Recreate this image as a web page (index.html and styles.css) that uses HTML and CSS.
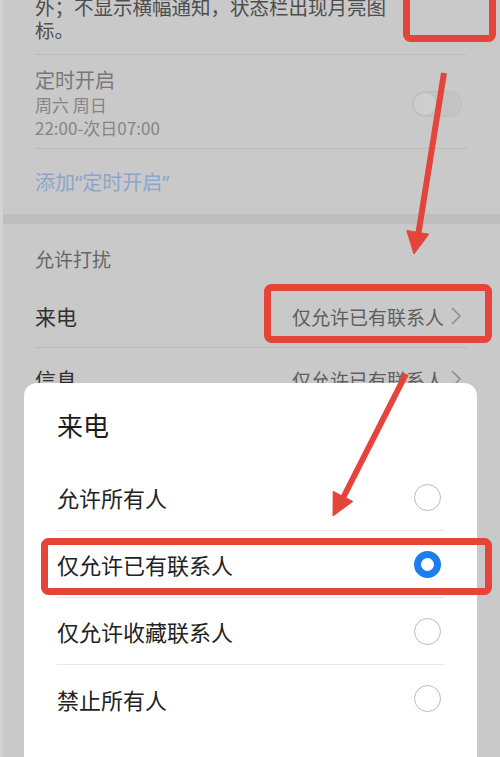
FILE: index.html
```html
<!DOCTYPE html>
<html lang="zh-CN">
<head>
<meta charset="utf-8">
<title>来电</title>
<link rel="stylesheet" href="styles.css">
</head>
<body>
<div class="screen">
  <div class="page">
    <div class="group">
      <div class="row intro">
        <p class="intro-text">外；不显示横幅通知，状态栏出现月亮图<br>标。</p>
        <span class="switch on"></span>
      </div>
      <div class="row timer">
        <div class="texts">
          <div class="timer-title">定时开启</div>
          <div class="timer-sub">周六 周日</div>
          <div class="timer-sub">22:00-次日07:00</div>
        </div>
        <span class="switch off"><span class="knob"></span></span>
      </div>
      <div class="link-row">添加“定时开启”</div>
    </div>
    <div class="band"></div>
    <div class="group">
      <div class="section-head">允许打扰</div>
      <div class="row item">
        <span class="label">来电</span>
        <span class="value">仅允许已有联系人<svg class="chev" width="12" height="20" viewBox="0 0 12 20"><polyline points="2,2 10,10 2,18" fill="none" stroke="#8a8a8a" stroke-width="1.5"/></svg></span>
      </div>
      <div class="row item">
        <span class="label">信息</span>
        <span class="value">仅允许已有联系人<svg class="chev" width="12" height="20" viewBox="0 0 12 20"><polyline points="2,2 10,10 2,18" fill="none" stroke="#8a8a8a" stroke-width="1.5"/></svg></span>
      </div>
    </div>
  </div>

  <div class="sheet">
    <div class="sheet-title">来电</div>
    <div class="option"><span>允许所有人</span><span class="radio"></span></div>
    <div class="option"><span>仅允许已有联系人</span><span class="radio checked"></span></div>
    <div class="option"><span>仅允许收藏联系人</span><span class="radio"></span></div>
    <div class="option"><span>禁止所有人</span><span class="radio"></span></div>
  </div>

  <svg class="annot" width="500" height="757" viewBox="0 0 500 757">
    <g fill="none" stroke="#e5443a" stroke-width="7">
      <rect x="406.5" y="-10" width="86" height="48.5" rx="4"/>
      <rect x="267.5" y="287.5" width="221" height="52" rx="4"/>
      <rect x="44.5" y="541.5" width="444" height="50" rx="4"/>
    </g>
    <g fill="#e5443a" stroke="#e5443a">
      <line x1="444" y1="73" x2="418" y2="236" stroke-width="6"/>
      <polygon points="414,254 406.8,230.5 428.8,234.2" stroke-width="1" stroke-linejoin="round"/>
      <line x1="406" y1="374" x2="343" y2="498" stroke-width="6"/>
      <polygon points="333,516 333.2,491.4 352.8,501.4" stroke-width="1" stroke-linejoin="round"/>
    </g>
  </svg>
</div>
</body>
</html>
```

FILE: styles.css
```css
* { box-sizing: border-box; }
html, body { margin: 0; padding: 0; }
body {
  background: #c9c9c9;
  font-family: "Noto Sans CJK SC", "Noto Sans", sans-serif;
}
.screen {
  position: relative;
  width: 500px;
  height: 757px;
  overflow: hidden;
  background: #c9c9c9;
  border-left: 3px solid #d2d2d2;
}
.page {
  margin-top: -5px;
  margin-left: -3px;
}
.group {
  padding: 0 33px 0 35px;
}
.row {
  display: flex;
  align-items: center;
  justify-content: space-between;
  border-bottom: 1px solid #bcbcbc;
}
.intro {
  align-items: flex-start;
  padding-bottom: 13px;
}
.intro-text {
  margin: 0;
  font-size: 19.5px;
  line-height: 23px;
  color: #4e4e4e;
}
.switch {
  display: block;
  width: 50px;
  height: 26px;
  border-radius: 13px;
}
.switch.on {
  margin-top: -25px;
  margin-right: 8px;
  width: 40px;
  background: #7a93b8;
}
.switch.off {
  position: relative;
  margin-right: 5px;
  margin-top: 2px;
  background: #c4c4c4;
  border: 1px solid #bdbdbd;
}
.switch .knob {
  position: absolute;
  left: 0;
  top: 0;
  width: 24px;
  height: 24px;
  border-radius: 50%;
  background: #cecece;
  border: 1px solid #bcbcbc;
}
.timer {
  padding-top: 11px;
  padding-bottom: 9px;
}
.timer-title {
  font-size: 20px;
  line-height: 27px;
  color: #787878;
}
.timer-sub {
  font-size: 17px;
  line-height: 23px;
  color: #858585;
}
.link-row {
  height: 65px;
  display: flex;
  align-items: center;
  font-family: "Noto Sans", "Noto Sans CJK SC", sans-serif;
  font-size: 20px;
  color: #8ba5cb;
}
.band {
  height: 10px;
  background: #bebebe;
}
.section-head {
  padding-top: 23px;
  padding-bottom: 14px;
  font-size: 19px;
  line-height: 24px;
  color: #666;
}
.item {
  height: 63px;
}
.label {
  font-size: 21px;
  color: #2e2e2e;
}
.value {
  display: flex;
  align-items: center;
  gap: 6px;
  font-size: 19px;
  color: #5e5e5e;
  margin-right: 5px;
}
.chev { display: block; }

.sheet {
  position: absolute;
  left: 21px;
  top: 383px;
  width: 453px;
  height: 420px;
  background: #fff;
  border-radius: 13px 13px 0 0;
  padding: 0 33px;
}
.sheet-title {
  padding-top: 25px;
  padding-bottom: 22px;
  font-size: 26px;
  line-height: 34px;
  color: #1c1c1c;
}
.option {
  height: 67px;
  display: flex;
  align-items: center;
  justify-content: space-between;
  border-bottom: 1px solid #e7e7e7;
  font-size: 22px;
  color: #222;
}
.option:last-child { border-bottom: none; }
.radio {
  display: block;
  width: 27px;
  height: 27px;
  margin-right: 3px;
  border-radius: 50%;
  border: 1.5px solid #b9b9b9;
}
.radio.checked {
  border: 7.5px solid #1a7ef0;
}
.annot {
  position: absolute;
  left: -3px;
  top: 0;
  pointer-events: none;
}
```
